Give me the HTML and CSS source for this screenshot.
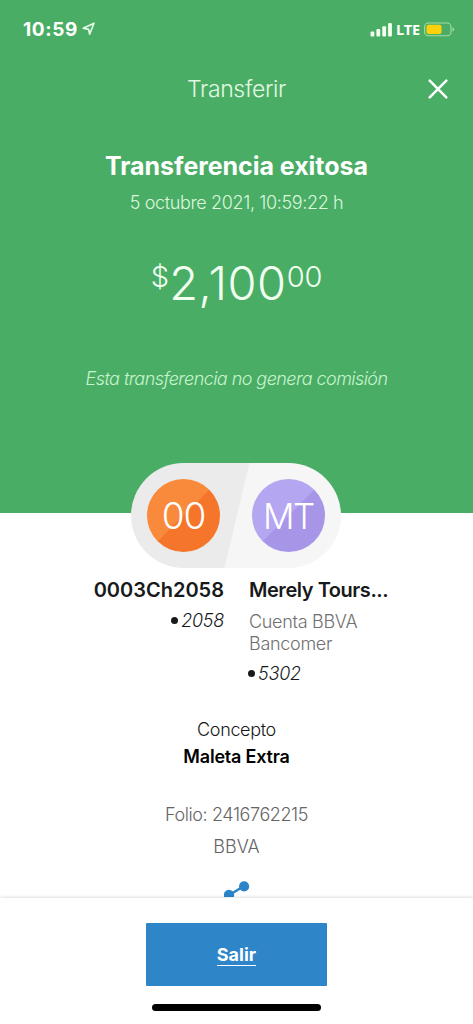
FILE: index.html
```html
<!DOCTYPE html>
<html lang="es">
<head>
<meta charset="utf-8">
<title>Transferir</title>
<link rel="stylesheet" href="styles.css">
</head>
<body>
<div class="screen">
  <header class="hero">
    <div class="status">
      <span class="clock">10:59</span>
      <svg class="location" width="14" height="14" viewBox="0 0 14 14"><path d="M1.2 6.2 12 1.2 7.6 12.2 6.6 7.4Z" fill="none" stroke="#e9fbe9" stroke-width="1.6" stroke-linejoin="round"/></svg>
      <span class="spacer"></span>
      <svg class="signal" width="23" height="15" viewBox="0 0 23 15" fill="#f4fff0"><rect x="0.5" y="9.5" width="3.8" height="5" rx="1"/><rect x="6.4" y="7" width="3.8" height="7.5" rx="1"/><rect x="12.3" y="4.2" width="3.8" height="10.3" rx="1"/><rect x="18.1" y="1" width="3.8" height="13.5" rx="1"/></svg>
      <span class="network">LTE</span>
      <svg class="battery" width="31" height="15" viewBox="0 0 31 15"><rect x="0.6" y="1" width="26.4" height="12.8" rx="3.8" fill="none" stroke="#a6dba4" stroke-width="1.1"/><rect x="2.5" y="2.8" width="15" height="9.2" rx="2" fill="#fdd20a"/><path d="M28.5 5.3Q30.2 6 30.2 7.4T28.5 9.6Z" fill="#a6dba4"/></svg>
    </div>
    <div class="navbar">
      <span class="nav-title">Transferir</span>
      <svg class="close" width="20" height="20" viewBox="0 0 20 20"><path d="M1.7 1.7 18.3 18.3M18.3 1.7 1.7 18.3" stroke="#fff" stroke-width="2.5" stroke-linecap="round"/></svg>
    </div>
    <h1 class="title">Transferencia exitosa</h1>
    <p class="date">5 octubre 2021, 10:59:22 h</p>
    <p class="amount"><span class="currency">$</span><span class="whole">2,100</span><span class="cents">00</span></p>
    <p class="fee">Esta transferencia no genera comisión</p>
  </header>
  <div class="pill">
    <div class="avatar origin"><span>00</span></div>
    <div class="avatar target"><span>MT</span></div>
  </div>
  <main class="details">
    <div class="parties">
      <div class="party from">
        <div class="name from-name">0003Ch2058</div>
        <div class="account"><i class="dot"></i><span>2058</span></div>
      </div>
      <div class="party to">
        <div class="name to-name">Merely Tours...</div>
        <div class="bank">Cuenta BBVA<br>Bancomer</div>
        <div class="account"><i class="dot"></i><span>5302</span></div>
      </div>
    </div>
    <div class="concept-label">Concepto</div>
    <div class="concept">Maleta Extra</div>
    <div class="folio">Folio: 2416762215</div>
    <div class="brand">BBVA</div>
    <svg class="share" width="28" height="17" viewBox="0 0 28 17" fill="#2c84c8"><path d="M7 14 20 6" stroke="#2c84c8" stroke-width="2.6"/><circle cx="20.1" cy="6.4" r="5.1"/><circle cx="5" cy="15" r="5.2"/></svg>
  </main>
  <footer class="footer">
    <button class="exit"><span>Salir</span></button>
    <div class="home"></div>
  </footer>
</div>
</body>
</html>
```
FILE: styles.css
```css
* { box-sizing: border-box; }
body { margin: 0; background: #fff; font-family: Inter, "Liberation Sans", sans-serif; }
p, h1 { margin: 0; }
.screen { width: 473px; height: 1024px; display: flex; flex-direction: column; overflow: hidden; }
.hero { height: 513px; flex: none; background: #4aad66; color: #fff; display: flex; flex-direction: column; align-items: center; white-space: nowrap; }
.status { width: 100%; height: 58px; padding: 0 18px 0 23px; display: flex; align-items: center; flex: none; }
.clock { font-size: 19px; font-weight: 700; letter-spacing: .6px; }
.location { margin-left: 4px; }
.spacer { flex: 1; }
.network { font: 700 14.5px "Open Sans", sans-serif; margin: 0 4px 0 3px; letter-spacing: -.2px; }
.navbar { width: 100%; height: 62px; padding: 0 25px 0 45px; display: flex; align-items: center; flex: none; }
.nav-title { flex: 1; text-align: center; font-size: 23px; font-weight: 300; color: #e3f8e2; letter-spacing: -.35px; }
.title { height: 34px; line-height: 34px; margin-top: 29px; font-size: 25px; font-weight: 700; letter-spacing: -.05px; }
.date { height: 24px; line-height: 24px; margin-top: 8px; font-size: 18px; font-weight: 300; color: #dcf7dc; letter-spacing: -.36px; }
.amount { height: 60px; margin-top: 38px; display: flex; align-items: flex-start; font-weight: 300; color: #f1fff0; }
.whole { font-size: 47px; line-height: 60px; letter-spacing: .6px; }
.currency, .cents { font-size: 29px; line-height: 47px; }
.cents { letter-spacing: -.2px; }
.fee { height: 28px; line-height: 28px; margin-top: 52px; font-size: 18px; font-weight: 300; font-style: italic; color: #c8f4cd; letter-spacing: -.55px; }
.pill { position: relative; width: 210px; height: 105px; margin: -50px 0 0 131px; flex: none; border-radius: 53px; background: linear-gradient(103.4deg, #ebebeb 50.2%, #f6f6f6 50.6%); padding: 0 16px; display: flex; align-items: center; justify-content: space-between; }
.avatar { width: 73px; height: 73px; border-radius: 50%; display: flex; align-items: center; justify-content: center; color: #fff; font-weight: 300; font-size: 37px; letter-spacing: -1px; }
.origin { background: linear-gradient(135deg, #f98a3b 49.5%, #f5752b 50.5%); }
.target { background: linear-gradient(135deg, #b4a6f0 49.5%, #a796e7 50.5%); font-size: 35px; letter-spacing: -1.5px; }
.details { flex: 1; display: flex; flex-direction: column; align-items: center; color: #17191a; overflow: hidden; white-space: nowrap; }
.parties { width: 100%; height: 128px; margin-top: 8px; display: grid; grid-template-columns: 224px 1fr; column-gap: 25px; flex: none; }
.from { display: flex; flex-direction: column; align-items: flex-end; }
.name { height: 28px; line-height: 28px; font-size: 20px; font-weight: 600; }
.to-name { letter-spacing: -.45px; }
.account { display: flex; align-items: center; gap: 3px; height: 24px; font-size: 18px; font-style: italic; font-weight: 300; letter-spacing: -.25px; }
.from .account { margin-top: 4px; }
.to .account { margin: 9px 0 0 -1px; }
.dot { width: 7px; height: 7px; border-radius: 50%; background: #17191a; }
.bank { height: 44px; margin-top: 4px; padding-top: 3px; line-height: 21.5px; font-size: 18px; font-weight: 300; color: #707070; letter-spacing: -.3px; }
.concept-label { height: 26px; line-height: 26px; margin-top: 13px; font-size: 18px; font-weight: 300; letter-spacing: -.35px; }
.concept { height: 26px; line-height: 26px; margin-top: 1px; font-size: 18px; font-weight: 600; color: #000; letter-spacing: -.2px; }
.folio { height: 28px; line-height: 28px; margin-top: 31px; font-size: 18px; font-weight: 300; color: #656565; letter-spacing: -.4px; }
.brand { height: 28px; line-height: 28px; margin-top: 4px; font-size: 18px; font-weight: 300; color: #656565; }
.share { margin: 19px 0 0 2px; flex: none; }
.footer { position: relative; height: 126px; flex: none; background: #fff; box-shadow: 0 -1px 3px rgba(0,0,0,.13); display: flex; flex-direction: column; align-items: center; padding-top: 25px; }
.exit { width: 181px; height: 63px; border: 0; border-radius: 1px; padding: 0; background: #2e86c9; color: #fff; font: 700 18px Inter, sans-serif; }
.exit span { border-bottom: 1.5px solid #fff; display: inline-block; line-height: 20px; }
.home { width: 169px; height: 7px; margin-top: 18px; border-radius: 4px; background: #000; }
```
